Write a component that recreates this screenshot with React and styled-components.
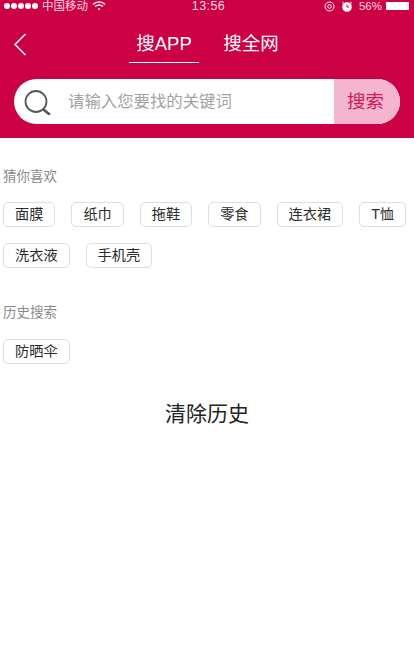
import React from 'react';
import styled, { createGlobalStyle } from 'styled-components';

const GlobalStyle = createGlobalStyle`
  html, body {
    margin: 0;
    padding: 0;
    background: #fff;
    font-family: "Liberation Sans", "Noto Sans CJK SC", sans-serif;
  }
`;

const Page = styled.div`
  width: 414px;
  height: 660px;
  overflow: hidden;
  background: #fff;
`;

const Header = styled.header`
  height: 138px;
  background: #cc0044;
  color: #fff;
  overflow: hidden;
`;

const StatusBar = styled.div`
  height: 12px;
  padding: 0 5px 0 4px;
  display: flex;
  align-items: center;
  justify-content: space-between;
  font-size: 11.5px;
  line-height: 12px;
  color: #f8dbe5;
`;

const StatusSide = styled.div`
  display: flex;
  align-items: center;
  gap: ${({ $gap }) => $gap || 4}px;
  width: ${({ $width }) => $width}px;
  justify-content: ${({ $end }) => ($end ? 'flex-end' : 'flex-start')};
`;

const Dots = styled.span`
  display: flex;
  gap: 1px;
`;

const Dot = styled.i`
  width: 6px;
  height: 6px;
  border-radius: 50%;
  background: #fff;
`;

const Time = styled.span`
  font-size: 12.5px;
  letter-spacing: 0.4px;
  margin-left: 4px;
`;

const Battery = styled.span`
  width: 23px;
  height: 8px;
  margin-left: -2px;
  background: #fff;
  border-radius: 1px;
`;

const NavRow = styled.nav`
  height: 51px;
  position: relative;
  display: flex;
  justify-content: center;
  padding-left: 1px;
`;

const BackButton = styled.button`
  position: absolute;
  left: 13px;
  top: 20px;
  width: 14px;
  height: 24px;
  padding: 0;
  border: 0;
  background: none;
  display: flex;
`;

const Tab = styled.div`
  width: 70px;
  height: 51px;
  margin-left: ${({ $offset }) => $offset || 0}px;
  box-sizing: border-box;
  padding-top: 18px;
  text-align: center;
  white-space: nowrap;
  font-size: 18.5px;
  line-height: 28px;
  border-bottom: 1px solid ${({ $active }) => ($active ? '#fff' : 'transparent')};
`;

const SearchBar = styled.div`
  height: 45px;
  margin: 16px 14px 0;
  display: flex;
  border-radius: 23px;
  overflow: hidden;
  background: #fff;
`;

const SearchIcon = styled.svg`
  width: 27px;
  height: 25px;
  margin: 11px 0 0 10px;
  flex: none;
`;

const Placeholder = styled.div`
  flex: 1;
  padding-left: 17px;
  font-size: 16.4px;
  line-height: 44px;
  color: #a3a3a3;
  white-space: nowrap;
`;

const SearchButton = styled.div`
  width: 66px;
  padding-right: 3px;
  box-sizing: border-box;
  background: #f4b5cf;
  color: #cc1a55;
  font-size: 18.5px;
  line-height: 45px;
  text-align: center;
`;

const Section = styled.section`
  padding: ${({ $top }) => $top}px 3px 0;
`;

const SectionTitle = styled.h2`
  margin: 0 0 ${({ $below }) => $below}px;
  font-size: 13.5px;
  font-weight: 400;
  line-height: 20px;
  color: #8a8a8a;
`;

const ChipList = styled.div`
  display: flex;
  flex-wrap: wrap;
  gap: 16px;
`;

const Chip = styled.span`
  height: 25px;
  box-sizing: border-box;
  padding: 0 11px;
  border: 1px solid #dedede;
  border-radius: 5px;
  background: #fff;
  color: #2b2b2b;
  font-size: 14.2px;
  line-height: 23px;
  white-space: nowrap;
`;

const ClearButton = styled.div`
  margin-top: 34px;
  text-align: center;
  font-size: 21px;
  line-height: 32px;
  color: #222;
`;

const guesses = ['面膜', '纸巾', '拖鞋', '零食', '连衣裙', 'T恤', '洗衣液', '手机壳'];
const history = ['防晒伞'];

const App = () => (
  <Page>
    <GlobalStyle />
    <Header>
      <StatusBar>
        <StatusSide $width={130}>
          <Dots>
            {[0, 1, 2, 3, 4].map(i => <Dot key={i} />)}
          </Dots>
          <span>中国移动</span>
          <svg width="14" height="10" viewBox="0 0 14 10" fill="none" stroke="#fff" strokeWidth="1.4">
            <path d="M1 3.4a8.5 8.5 0 0 1 12 0M3.2 5.6a5.4 5.4 0 0 1 7.6 0" />
            <circle cx="7" cy="8" r="1" fill="#fff" stroke="none" />
          </svg>
        </StatusSide>
        <Time>13:56</Time>
        <StatusSide $width={130} $end $gap={6}>
          <svg width="11" height="11" viewBox="0 0 11 11" fill="none" stroke="#fff">
            <circle cx="5.5" cy="5.5" r="4.5" />
            <circle cx="5.5" cy="5.5" r="1.8" />
          </svg>
          <svg width="12" height="11" viewBox="0 0 12 11">
            <circle cx="6" cy="6" r="4.8" fill="#fff" />
            <path d="M6 3.4V6h2" stroke="#cc0044" fill="none" />
            <path d="M1 2.4 2.8 1M11 2.4 9.2 1" stroke="#fff" />
          </svg>
          <span>56%</span>
          <Battery />
        </StatusSide>
      </StatusBar>
      <NavRow>
        <BackButton aria-label="返回">
          <svg width="14" height="24" viewBox="0 0 14 24" fill="none" stroke="#fff" strokeWidth="1.5">
            <path d="M12.5 2 2 12.5 12.5 23" />
          </svg>
        </BackButton>
        <Tab $active>搜APP</Tab>
        <Tab $offset={17}>搜全网</Tab>
      </NavRow>
      <SearchBar>
        <SearchIcon viewBox="0 0 27 25" fill="none" stroke="#555">
          <circle cx="12" cy="11.5" r="10.5" strokeWidth="1.8" />
          <path d="M20 20 25 24" strokeWidth="2.6" strokeLinecap="round" />
        </SearchIcon>
        <Placeholder>请输入您要找的关键词</Placeholder>
        <SearchButton>搜索</SearchButton>
      </SearchBar>
    </Header>
    <Section $top={29}>
      <SectionTitle $below={15}>猜你喜欢</SectionTitle>
      <ChipList>
        {guesses.map(item => <Chip key={item}>{item}</Chip>)}
      </ChipList>
    </Section>
    <Section $top={35}>
      <SectionTitle $below={16}>历史搜索</SectionTitle>
      <ChipList>
        {history.map(item => <Chip key={item}>{item}</Chip>)}
      </ChipList>
    </Section>
    <ClearButton>清除历史</ClearButton>
  </Page>
);

export default App;
